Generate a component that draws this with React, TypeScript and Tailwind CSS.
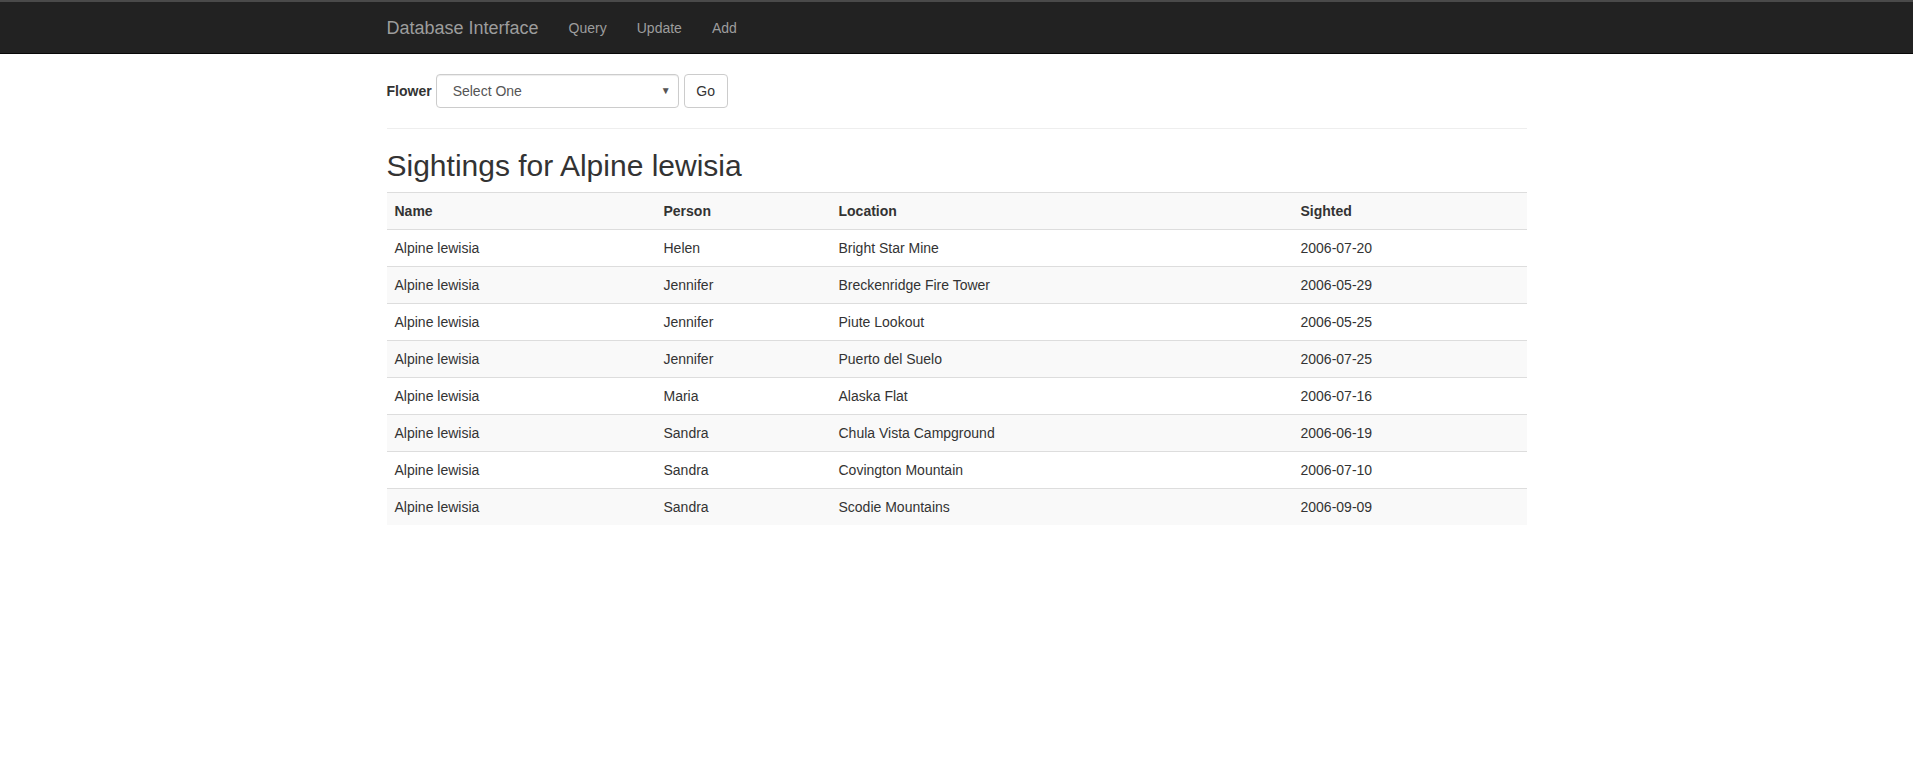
import React from "react";

const rows = [
  ["Alpine lewisia", "Helen", "Bright Star Mine", "2006-07-20"],
  ["Alpine lewisia", "Jennifer", "Breckenridge Fire Tower", "2006-05-29"],
  ["Alpine lewisia", "Jennifer", "Piute Lookout", "2006-05-25"],
  ["Alpine lewisia", "Jennifer", "Puerto del Suelo", "2006-07-25"],
  ["Alpine lewisia", "Maria", "Alaska Flat", "2006-07-16"],
  ["Alpine lewisia", "Sandra", "Chula Vista Campground", "2006-06-19"],
  ["Alpine lewisia", "Sandra", "Covington Mountain", "2006-07-10"],
  ["Alpine lewisia", "Sandra", "Scodie Mountains", "2006-09-09"],
];

export default function App() {
  return (
    <div
      className="min-h-screen bg-white text-[14px] leading-[20px] text-[#333]"
      style={{ fontFamily: '"Liberation Sans", Arial, Helvetica, sans-serif' }}
    >
      <nav className="h-[54px] bg-[#222] border-t-2 border-t-[#4a4a4a] border-b border-b-[#080808]">
        <div className="w-[1170px] mx-auto px-[15px] h-full flex items-center pt-[1px]">
          <span className="text-[18px] leading-[20px] text-[#9d9d9d] pr-[15px]">Database Interface</span>
          <a className="px-[15px] text-[#9d9d9d]">Query</a>
          <a className="px-[15px] text-[#9d9d9d]">Update</a>
          <a className="px-[15px] text-[#9d9d9d]">Add</a>
        </div>
      </nav>

      <div className="w-[1170px] mx-auto px-[15px] pt-[20px]">
        <div className="flex items-center h-[34px]">
          <label className="font-bold mr-[4px]">Flower</label>
          <div className="relative w-[243px] h-[34px] border border-[#ccc] rounded-[4px] shadow-[inset_0_1px_1px_rgba(0,0,0,0.075)] flex items-center pl-[16px] text-[#555]">
            Select One
            <span className="absolute right-[7px] top-[8px] text-[10px] leading-[16px] text-[#555]">▼</span>
          </div>
          <button className="ml-[5px] h-[34px] w-[44px] border border-[#ccc] rounded-[4px] bg-white text-[#333]">
            Go
          </button>
        </div>

        <hr className="mt-[20px] border-0 border-t border-t-[#eee]" />

        <h2 className="mt-[20px] mb-[10px] text-[30px] leading-[33px] font-normal text-[#333]">
          Sightings for Alpine lewisia
        </h2>

        <table className="w-[1140px] table-fixed border-collapse">
          <colgroup>
            <col className="w-[269px]" />
            <col className="w-[175px]" />
            <col className="w-[462px]" />
            <col className="w-[234px]" />
          </colgroup>
          <tbody>
            <tr className="bg-[#f9f9f9]">
              {["Name", "Person", "Location", "Sighted"].map((h) => (
                <th key={h} className="text-left font-bold p-[8px] border-t border-t-[#ddd]">
                  {h}
                </th>
              ))}
            </tr>
            {rows.map((r, i) => (
              <tr key={i} className={i % 2 === 1 ? "bg-[#f9f9f9]" : "bg-white"}>
                {r.map((c, j) => (
                  <td key={j} className="p-[8px] border-t border-t-[#ddd]">
                    {c}
                  </td>
                ))}
              </tr>
            ))}
          </tbody>
        </table>
      </div>
    </div>
  );
}
